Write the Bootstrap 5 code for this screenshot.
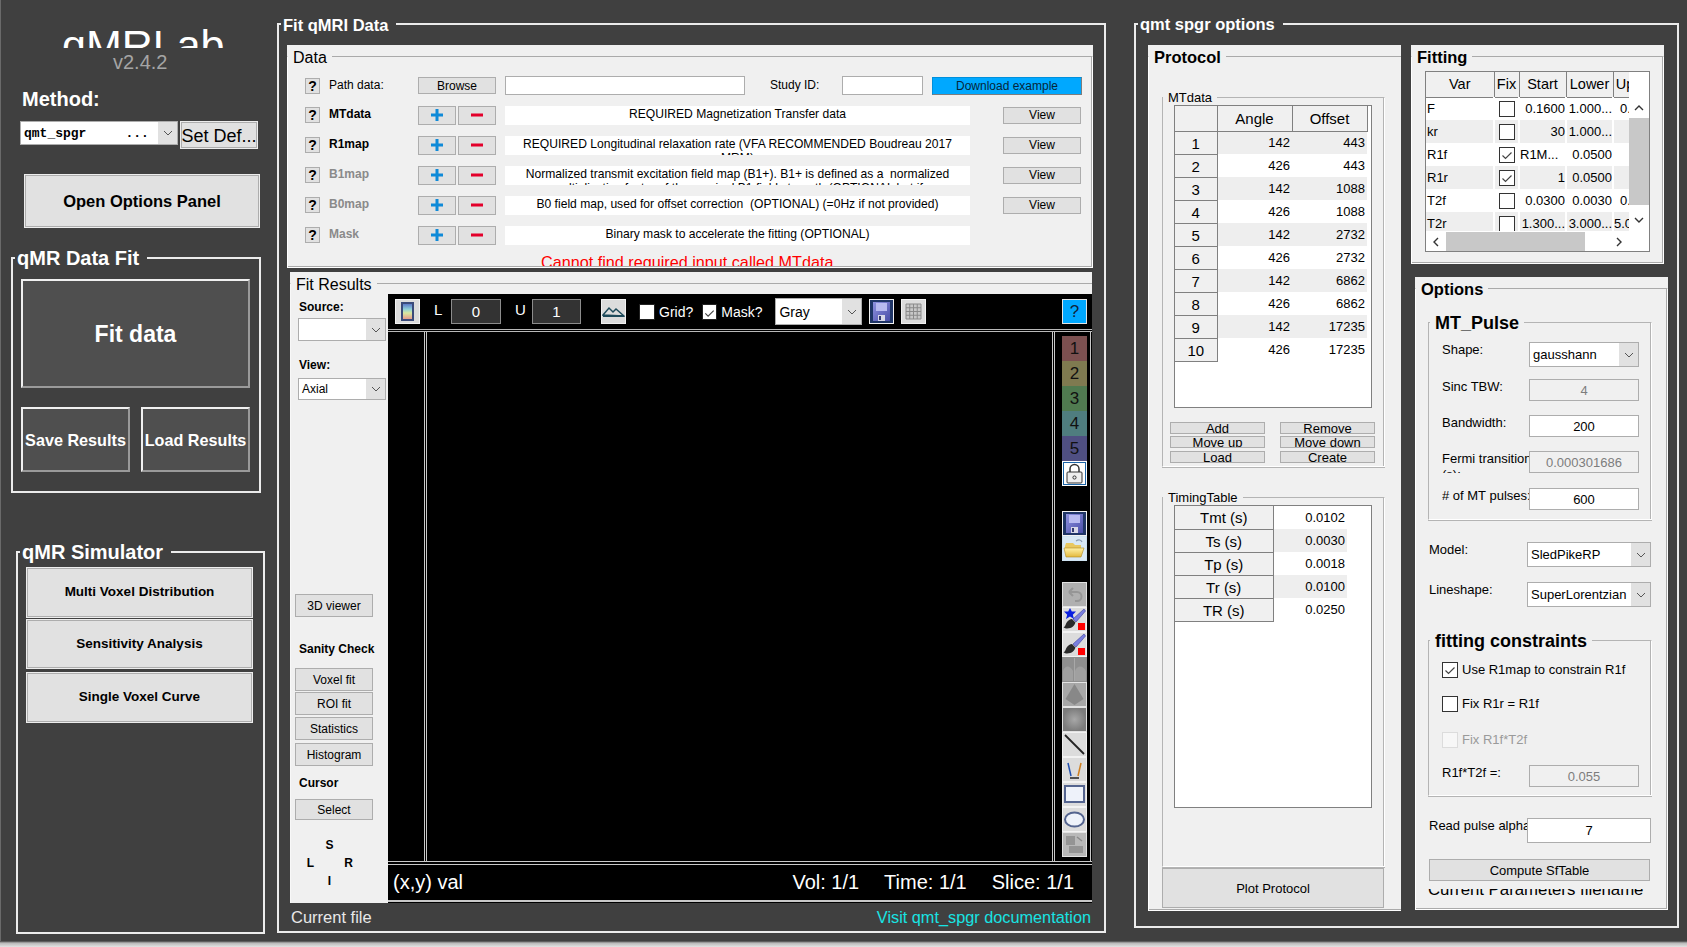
<!DOCTYPE html>
<html lang="en">
<head>
<meta charset="UTF-8" />
<title>qMRLab</title>
<link href="https://cdn.jsdelivr.net/npm/bootstrap@5.3.0/dist/css/bootstrap.min.css" rel="stylesheet"/>
<style>
  html, body { height: 100%; }
  body {
    margin: 0; width: 1687px; height: 947px; overflow: hidden;
    background: linear-gradient(to bottom, #404040 941px, #b8b8b8 943px, #e4e4e4 947px);
    font-family: "Liberation Sans", Arial, sans-serif; font-size: 13px; line-height: 16px; color: #000;
  }
  .svg-defs { display: block; width: 0; height: 0; }
  .app-root { height: 941px; box-shadow: inset 1px 0 #6a6a6a; }

  /* shared widgets */
  .mbtn {
    --bs-btn-padding-x: 0; --bs-btn-padding-y: 0; --bs-btn-border-radius: 0;
    --bs-btn-font-size: 12px; --bs-btn-line-height: 1;
    --bs-btn-bg: #e1e1e1; --bs-btn-border-color: #adadad; --bs-btn-color: #000;
    display: flex; align-items: center; justify-content: center; flex: none;
    white-space: nowrap; overflow: hidden; border-width: 1px;
    font-family: inherit;
  }
  .big-light { --bs-btn-border-color: #ededed; box-shadow: inset 0 0 0 1px #adadad; }
  .big-dark {
    --bs-btn-bg: #4f4f4f; --bs-btn-color: #fff; font-weight: 700; border-width: 2px;
    border-color: #f0f0f0 #9a9a9a #9a9a9a #f0f0f0; padding-top: 2px;
  }
  .msel { display: flex; flex: none; background: #fff; border: 1px solid #adadad; align-items: center; overflow: hidden; color: #000; }
  .msel > span { flex: 1; padding-left: 3px; white-space: pre; overflow: hidden; }
  .msel > i { flex: none; width: 19px; align-self: stretch; background: #e1e1e1; display: flex; align-items: center; justify-content: center; }
  .minp {
    flex: none; display: block; border: 1px solid #adadad; background: #fff; color: #000; text-align: center;
    font: 13px/16px "Liberation Sans", Arial, sans-serif; padding: 0; border-radius: 0; outline: 0; min-width: 0;
  }
  .minp:disabled { background: #f0f0f0; color: #7d7d7d; }
  .gbox { flex: none; width: 16px; height: 16px; background: #fff; border: 1px solid #333; display: block; }
  .gbox svg { display: block; }

  /* white group frames on the dark window */
  .frame { border: 2px solid #ececec; padding: 0; margin: 0; min-width: 0; }
  .frame > legend {
    float: none; width: auto; margin: 0 0 0 2px; padding: 0 8px 0 2px;
    color: #fff; font-weight: 700; font-size: 20px; line-height: 22px;
  }
  /* light uipanels */
  .pane { background: #f0f0f0; overflow: hidden; padding-top: 1px; flex: none; }
  .etch { border: 1px solid #aaa; border-bottom-color: #fff; border-right-color: #fff; border-left-color: #fff; padding: 0; margin: 0; height: 100%; min-width: 0; box-shadow: inset 0 -1px #aaa, inset -1px 0 #aaa; }
  .etch > legend {
    float: none; width: auto; margin: 0; padding: 3px 5px 0 5px;
    font-size: 16px; line-height: 17px; color: #000;
  }
  .etch.head-bold > legend { font-weight: 700; font-size: 16.5px; }
  .sub { border: 1px solid #b4b4b4; border-bottom-color: #fff; border-right-color: #fff; padding: 0; margin: 0; min-width: 0; box-shadow: 0 1px #b4b4b4, inset -1px 0 #b4b4b4; }
  .sub > legend { float: none; width: auto; margin: 0; padding: 2px 5px 0 5px; font-size: 13px; line-height: 14px; }
  .sub.head-big > legend { margin-left: 1px; font-weight: 700; font-size: 18px; line-height: 17px; padding-top: 3px; }

  /* left column */
  .col-left { width: 277px; flex: none; }
  .logo-clip { height: 48px; overflow: hidden; padding: 24px 0 0 62px; color: #fff; font-size: 43px; line-height: 43px; }
  .ver { margin: 4px 0 0 113px; color: #a5a5a5; font-size: 20px; line-height: 20px; }
  .method-lbl { margin: 17px 0 0 22px; color: #fff; font-weight: 700; font-size: 20px; line-height: 20px; }
  .method-row { margin: 12px 0 0 20px; height: 28px; }
  .method-sel { width: 158px; height: 24px; font: 700 13px "Liberation Mono", monospace; }
  .setdef { width: 78px; height: 28px; margin-left: 2px; --bs-btn-font-size: 18px; padding-top: 2px; }
  .open-opts { margin: 25px 0 0 24px; width: 236px; height: 54px; --bs-btn-font-size: 16.5px; font-weight: 700; padding-top: 1px; }
  .fit-frame { margin: 19px 0 0 11px; width: 250px; height: 246px; }
  .fit-go { margin: 10px 0 0 8px; width: 229px; height: 109px; --bs-btn-font-size: 23px; }
  .fit-row { margin: 19px 0 0 8px; gap: 11px; }
  .fit-row .mbtn { width: 109px; height: 65px; --bs-btn-font-size: 16.2px; }
  .sim-frame { margin: 48px 0 0 16px; width: 249px; height: 393px; }
  .sim-frame .mbtn { width: 227px; margin-left: 8px; --bs-btn-font-size: 13.5px; font-weight: 700; }
  .sim1 { height: 51px; margin-top: 4px; padding-bottom: 2px; }
  .sim2 { height: 50px; margin-top: 1px; }
  .sim3 { height: 51px; margin-top: 3px; padding-bottom: 2px; }

  /* middle column */
  .col-mid { width: 829px; flex: none; margin-top: 14px; height: 919px; }
  .col-mid > legend, .col-right > legend { font-size: 16.5px; line-height: 17px; padding-top: 3px; }
  .data-pane { margin: 11px 0 0 8px; width: 806px; height: 223px; }
  .drow { display: flex; align-items: center; height: 20px; margin-top: 10px; font-size: 12px; }
  .drow.first { height: 19px; }
  .qbtn { width: 15px; height: 16px; margin-left: 17px; --bs-btn-font-size: 14px; font-weight: 700; }
  .dname { width: 98px; padding: 0 0 2px 9px; flex: none; }
  .fname { font-weight: 700; }
  .off { color: #8a8a8a; }
  .pm { width: 38px; height: 19px; }
  .pm + .pm { margin-left: 2px; }
  .browse { width: 78px; height: 17px; }
  .path { width: 240px; height: 19px; margin-left: 9px; }
  .study-l { width: 97px; padding: 0 0 2px 25px; flex: none; }
  .study { width: 81px; height: 19px; }
  .dl { width: 150px; height: 18px; margin-left: 9px; --bs-btn-bg: #00a8ff; --bs-btn-color: #06263a; --bs-btn-border-color: #0090dc; border-bottom-color: #7d7d7d; border-right-color: #7d7d7d; }
  .desc { width: 465px; height: 19px; margin-left: 9px; background: #fff; overflow: hidden; text-align: center; padding: 1px 4px 0; line-height: 14px; flex: none; font-size: 12.1px; }
  .view { width: 78px; height: 17px; margin-left: 33px; }
  .err { margin: 8px 0 0 253px; height: 13px; overflow: hidden; color: #f00; font-size: 16.2px; line-height: 18px; white-space: nowrap; }

  .res-pane { margin: 4px 0 0 11px; width: 802px; height: 631px; }
  .res-pane .etch { box-shadow: none; border-left-color: #f8f8f8; border-bottom: 0; border-right: 0; }
  .side { width: 97px; flex: none; font-size: 12px; height: 610px; }
  .lbl-b { font-weight: 700; line-height: 15px; margin-left: 8px; }
  .src-lab { margin-top: 7px; }
  .side-sel { width: 88px; margin-left: 7px; height: 23px; font-size: 12px; }
  .sel-src { margin-top: 3px; }
  .view-lab { margin-top: 17px; }
  .sel-ax { margin-top: 5px; height: 22px; }
  .sbtn { width: 78px; margin-left: 4px; height: 23px; }
  .b3d { margin-top: 194px; }
  .san { margin-top: 25px; }
  .s1 { margin-top: 11px; } .s2 { margin-top: 1px; } .s3 { margin-top: 2px; } .s4 { margin-top: 3px; }
  .cur { margin-top: 10px; }
  .s5 { margin-top: 8px; height: 21px; }
  .ori { display: grid; grid-template-columns: repeat(3, 19px); margin: 18px 0 0 10px; font-weight: 700; line-height: 15px; text-align: center; row-gap: 3px; }
  .ori b:nth-child(1) { grid-column: 2; }
  .ori b:nth-child(2) { grid-column: 1; }
  .ori b:nth-child(3) { grid-column: 3; }
  .ori b:nth-child(4) { grid-column: 2; }

  .scope { flex: 1; background: #000; height: 609px; margin-top: 1px; color: #fff; min-width: 0; }
  .scope-top { height: 38px; align-items: center; padding: 0 5px 0 7px; border-bottom: 3px double #b9b9b9; }
  .tbtn { flex: none; width: 25px; height: 25px; background: #dcdcdc; border: 1px solid #f2f2f2; display: block; padding: 0; }
  .tbtn svg { display: block; width: 23px; height: 23px; }
  .lim { flex: none; width: 50px; height: 25px; background: #333; border: 1px solid #8c8c8c; color: #fff; font-size: 15px; text-align: center; margin-left: 3px; }
  .lim-l { flex: none; width: 14px; font-size: 15px; margin-left: 14px; margin-bottom: 4px; }
  .u-val { width: 49px; }
  .mtn { margin-left: 20px; }
  .mini-chk { flex: none; width: 16px; height: 16px; background: #fff; border: 1px solid #222; display: block; }
  .chk-a { margin-left: 13px; } .chk-b { margin-left: 9px; width: 15px; }
  .tt { font-size: 14px; margin-left: 4px; }
  .cmap { width: 87px; height: 27px; font-size: 14px; margin-left: 13px; }
  .save-a { margin-left: 7px; }
  .gridb { margin-left: 7px; }
  .scope-q { width: 25px; height: 25px; margin-left: auto; --bs-btn-bg: #00a8ff; --bs-btn-border-color: #e4e4e4; --bs-btn-font-size: 17px; --bs-btn-color: #10233a; }
  .scope-mid { height: 529px; }
  .plot-wrap { width: 667px; flex: none; border-right: 3px double #c8c8c8; padding-left: 36px; }
  .plot { height: 100%; border-left: 3px double #c8c8c8; }
  .tools { width: 36px; flex: none; border-right: 1px solid #c8c8c8; padding: 4px 0 0 7px; margin-right: 1px; }
  .num { width: 25px; height: 25px; display: flex; align-items: center; justify-content: center; color: #111; font-size: 17px; }
  .n1 { background: #7c5050; } .n2 { background: #7f7a50; } .n3 { background: #507a50; } .n4 { background: #4f7d7f; } .n5 { background: #4f4f82; }
  .t-lock { background: #fff; border-color: #fff; outline: 1px solid #1a64a8; outline-offset: -2px; }
  .t-save { margin-top: 25px; } .t-open { border-color: #cfe3f2; }
  .t-undo { margin-top: 21px; }
  .t-gray { background: #b0b0b0; border-color: #e2e2e2; } .t-flat { border-color: #8f8f8f; }
  .scope-low { height: 41px; border-top: 4px double #c8c8c8; border-bottom: 2px solid #c8c8c8; align-items: center; padding: 0 18px 2px 5px; font-size: 20px; }
  .gap-s { margin-left: 25px; }
  .foot { height: 26px; padding: 1px 13px 0 12px; align-items: center; justify-content: space-between; }
  .foot-l { color: #e8e8e8; font-size: 16.5px; }
  .foot-r { color: #18e3e3; font-size: 16.3px; }

  /* right column */
  .col-right { width: 545px; flex: none; margin: 14px 0 0 28px; height: 914px; }
  .col-right > legend { padding-top: 2px; padding-bottom: 1px; }
  .prot { width: 253px; height: 866px; margin: 11px 0 0 12px; }
  .prot .etch { box-shadow: inset 0 -1px #aaa; border-right: 0; }
  .grp { margin-left: 13px; width: 223px; height: 378px; }
  .grp-a { margin-top: 23px; }
  .grp-b { margin-top: 22px; }
  .tbl-box { margin-left: 11px; width: 198px; height: 303px; border: 1px solid #808080; background: #fff; overflow: hidden; }
  .ptab { table-layout: fixed; border-collapse: collapse; }
  .ptab th { font-weight: 400; background: #f0f0f0; border-right: 1px solid #808080; border-bottom: 1px solid #808080; font-size: 15px; text-align: center; padding: 2px 0 0; overflow: hidden; }
  .ptab td { font-size: 13px; text-align: right; padding: 0 2px 0 0; white-space: nowrap; overflow: hidden; }
  .ptab tr { height: 23px; }
  .ptab tr.hd { height: 25px; }
  .ptab tbody tr:nth-child(even) td { background: #eee; }
  .pbtns { display: grid; grid-template-columns: 95px 95px; column-gap: 15px; margin: 14px 0 0 7px; }
  .pbtns .mbtn { height: 12px; --bs-btn-font-size: 13px; width: 95px; }
  .pbtns .gap2 { margin-top: 2px; }
  .pbtns .gap3 { margin-top: 3px; }
  .plot-prot { width: 222px; height: 40px; margin: 1px 0 0 13px; --bs-btn-font-size: 13px; }

  .stack { margin-left: 10px; flex: none; width: 257px; }
  .fitting { width: 253px; height: 219px; margin-top: 11px; }
  .fitting .etch { box-shadow: inset 0 -1px #aaa, inset -1px 0 #aaa; }
  .ftab-box { margin: 5px 0 0 13px; width: 225px; height: 181px; border: 1px solid #808080; background: #fff; overflow: hidden; }
  .ftab-top { height: 159px; }
  .ftab-clip { width: 203px; height: 159px; overflow: hidden; flex: none; }
  .ftab { table-layout: fixed; border-collapse: collapse; width: 232px; font-size: 13px; }
  .ftab th { font-weight: 400; text-align: center; font-size: 14.5px; background: #f0f0f0; border-right: 1px solid #808080; border-bottom: 1px solid #808080; padding: 0; height: 25px; white-space: nowrap; overflow: hidden; }
  .ftab td { padding: 0; height: 23px; white-space: nowrap; overflow: hidden; text-align: right; background: #fff; border-right: 2px solid #fff; }
  .ftab tr:nth-child(even) td { background: #eee; border-right-color: #fff; }
  .ftab td:first-child { text-align: left; padding: 0 0 0 1px; }
  .ftab td.mid .gbox { margin: 0 auto; }
  .ftab td.lft { text-align: left; }
  .ftab td.ind { padding-left: 6px; }
  .vbar { width: 20px; flex: none; padding-top: 25px; }
  .vbar i, .hbar i { display: flex; align-items: center; justify-content: center; }
  .vbar i { height: 21px; }
  .vbar em { display: block; height: 87px; background: #c8c8c8; margin-bottom: 4px; }
  .hbar { height: 20px; width: 203px; margin-top: 1px; }
  .hbar i { width: 20px; }
  .hbar em { display: block; width: 139px; background: #c8c8c8; }
  .hbar .rgt { margin-left: auto; }

  .options { width: 253px; height: 633px; margin: 13px 0 0 4px; }
  .options .etch { box-shadow: inset 0 -1px #aaa, inset -1px 0 #aaa; }
  .pulse { margin: 14px 0 0 12px; width: 224px; height: 208px; }
  .cons { margin: 23px 0 0 12px; width: 224px; height: 166px; }
  .frow { display: flex; margin-left: 13px; overflow: hidden; }
  .flab { width: 87px; flex: none; white-space: nowrap; overflow: hidden; }
  .fval { width: 110px; height: 22px; }
  .fsel { width: 110px; height: 25px; }
  .frow2 { display: flex; margin-left: 13px; overflow: hidden; }
  .flab2 { width: 98px; flex: none; white-space: nowrap; overflow: hidden; }
  .fsel2 { width: 124px; height: 25px; }
  .chk-row { display: flex; align-items: center; gap: 4px; margin-left: 13px; height: 16px; }
  .dis { color: #9a9a9a; }
  .gbox.dis-b { background: #f7f7f7; border-color: #dcdcdc; }
  .compute { width: 221px; height: 22px; margin: 16px 0 0 13px; --bs-btn-font-size: 13px; }
  .tail { margin: 8px 0 0 12px; height: 10px; overflow: hidden; font-size: 16.8px; white-space: nowrap; }
  .tail span { display: block; margin-top: -8px; line-height: 18px; }
  .r-shape { margin-top: 10px; height: 25px; } .r-sinc { margin-top: 12px; height: 22px; }
  .r-band { margin-top: 14px; height: 22px; } .r-fermi { margin-top: 14px; height: 22px; } .r-num { margin-top: 15px; height: 22px; }
  .r-model { margin-top: 22px; height: 25px; } .r-line { margin-top: 15px; height: 25px; }
  .c1 { margin-top: 12px; } .c2 { margin-top: 18px; } .c3 { margin-top: 20px; } .c4 { margin-top: 17px; height: 22px; }
  .r-read { margin-top: 22px; height: 25px; }
</style>
</head>
<body>

<!-- shared icon shapes -->
<svg class="svg-defs" aria-hidden="true">
  <defs>
    <symbol id="chev" viewBox="0 0 10 6"><path d="M1 1l4 4 4-4" fill="none" stroke="#555" stroke-width="1"/></symbol>
    <symbol id="tick" viewBox="0 0 14 14"><path d="M2.500 7.500l3 3 6-6" fill="none" stroke="#444" stroke-width="1.200"/></symbol>
    <symbol id="plus" viewBox="0 0 12 12"><path d="M4.500 0h3v4.500H12v3H7.500V12h-3V7.500H0v-3h4.500z" fill="#0f8ad8"/></symbol>
    <symbol id="minus" viewBox="0 0 12 12"><rect y="4.500" width="12" height="3" fill="#e3002b"/></symbol>
    <linearGradient id="cbar" x1="0" y1="0" x2="0" y2="1">
      <stop offset="0" stop-color="#5d79c8"/><stop offset=".35" stop-color="#8fd0d8"/>
      <stop offset=".6" stop-color="#d8e8a0"/><stop offset="1" stop-color="#e69a8c"/>
    </linearGradient>
    <linearGradient id="flop" x1="0" y1="0" x2="1" y2="1">
      <stop offset="0" stop-color="#8f92e0"/><stop offset="1" stop-color="#4a4ea8"/>
    </linearGradient>
    <linearGradient id="fold" x1="0" y1="0" x2="0" y2="1">
      <stop offset="0" stop-color="#fff2a8"/><stop offset="1" stop-color="#e3b93c"/>
    </linearGradient>
    <radialGradient id="blurc"><stop offset="0" stop-color="#a8a8a8"/><stop offset="1" stop-color="#7c7c7c"/></radialGradient>
    <symbol id="floppy" viewBox="0 0 23 23">
      <rect width="23" height="23" fill="#1f3566"/>
      <path d="M3 2h17v19H3z" fill="url(#flop)"/>
      <rect x="6" y="3" width="11" height="8" fill="#b8baf0"/>
      <rect x="8" y="15" width="7" height="6" fill="#d8d8e8"/>
      <rect x="9" y="16" width="2" height="4" fill="#333a70"/>
    </symbol>
    <symbol id="brush" viewBox="0 0 23 23">
      <path d="M21 1l1.500 2-9.500 11-3-3z" fill="#7a7fe0" stroke="#3a3f9a" stroke-width=".6"/>
      <path d="M9 11l3.500 3.500c-1 3-3.500 6-8.500 6-1 0-2.500-.5-3.500-1 2-1 2-3.500 3.500-5.500 1-1.500 3-3 5-3z" fill="#2a2a2a"/>
      <rect x="15" y="15" width="7" height="7" fill="#f00"/>
    </symbol>
  </defs>
</svg>

<div class="d-flex app-root">

  <!-- left column: method and launch buttons -->
  <div class="col-left">
    <div class="logo-clip">qMRLab</div>
    <div class="ver">v2.4.2</div>
    <div class="method-lbl">Method:</div>
    <div class="method-row d-flex align-items-start">
      <div class="msel method-sel"><span>qmt_spgr     ...</span><i><svg width="10" height="6"><use href="#chev"/></svg></i></div>
      <button class="btn mbtn setdef big-light">Set Def...</button>
    </div>
    <button class="btn mbtn big-light open-opts">Open Options Panel</button>

    <fieldset class="frame fit-frame">
      <legend>qMR Data Fit</legend>
      <button class="btn mbtn big-dark fit-go">Fit data</button>
      <div class="d-flex fit-row">
        <button class="btn mbtn big-dark">Save Results</button>
        <button class="btn mbtn big-dark">Load Results</button>
      </div>
    </fieldset>

    <fieldset class="frame sim-frame">
      <legend>qMR Simulator</legend>
      <button class="btn mbtn big-light sim1">Multi Voxel Distribution</button>
      <button class="btn mbtn big-light sim2">Sensitivity Analysis</button>
      <button class="btn mbtn big-light sim3">Single Voxel Curve</button>
    </fieldset>
  </div>

  <!-- middle column: data and viewer -->
  <fieldset class="frame col-mid">
    <legend>Fit qMRI Data</legend>

    <div class="pane data-pane">
      <fieldset class="etch">
        <legend>Data</legend>
        <div class="drow first">
          <button class="btn mbtn qbtn">?</button>
          <div class="dname">Path data:</div>
          <button class="btn mbtn browse">Browse</button>
          <input class="minp path" type="text">
          <div class="study-l">Study ID:</div>
          <input class="minp study" type="text">
          <button class="btn mbtn dl">Download example</button>
        </div>
        <div class="drow">
          <button class="btn mbtn qbtn">?</button>
          <div class="dname fname">MTdata</div>
          <button class="btn mbtn pm"><svg width="12" height="12"><use href="#plus"/></svg></button>
          <button class="btn mbtn pm"><svg width="12" height="12"><use href="#minus"/></svg></button>
          <div class="desc">REQUIRED Magnetization Transfer data</div>
          <button class="btn mbtn view">View</button>
        </div>
        <div class="drow">
          <button class="btn mbtn qbtn">?</button>
          <div class="dname fname">R1map</div>
          <button class="btn mbtn pm"><svg width="12" height="12"><use href="#plus"/></svg></button>
          <button class="btn mbtn pm"><svg width="12" height="12"><use href="#minus"/></svg></button>
          <div class="desc">REQUIRED Longitudinal relaxation rate (VFA RECOMMENDED Boudreau 2017 MRM)</div>
          <button class="btn mbtn view">View</button>
        </div>
        <div class="drow">
          <button class="btn mbtn qbtn">?</button>
          <div class="dname fname off">B1map</div>
          <button class="btn mbtn pm"><svg width="12" height="12"><use href="#plus"/></svg></button>
          <button class="btn mbtn pm"><svg width="12" height="12"><use href="#minus"/></svg></button>
          <div class="desc">Normalized transmit excitation field map (B1+). B1+ is defined as a&nbsp; normalized multiplicative factor of the nominal B1 field strength (OPTIONAL but if</div>
          <button class="btn mbtn view">View</button>
        </div>
        <div class="drow">
          <button class="btn mbtn qbtn">?</button>
          <div class="dname fname off">B0map</div>
          <button class="btn mbtn pm"><svg width="12" height="12"><use href="#plus"/></svg></button>
          <button class="btn mbtn pm"><svg width="12" height="12"><use href="#minus"/></svg></button>
          <div class="desc">B0 field map, used for offset correction&nbsp; (OPTIONAL) (=0Hz if not provided)</div>
          <button class="btn mbtn view">View</button>
        </div>
        <div class="drow">
          <button class="btn mbtn qbtn">?</button>
          <div class="dname fname off">Mask</div>
          <button class="btn mbtn pm"><svg width="12" height="12"><use href="#plus"/></svg></button>
          <button class="btn mbtn pm"><svg width="12" height="12"><use href="#minus"/></svg></button>
          <div class="desc">Binary mask to accelerate the fitting (OPTIONAL)</div>
        </div>
        <div class="err">Cannot find required input called MTdata</div>
      </fieldset>
    </div>

    <div class="pane res-pane">
      <fieldset class="etch">
        <legend>Fit Results</legend>
        <div class="d-flex">
          <div class="side">
            <div class="lbl-b src-lab">Source:</div>
            <div class="msel side-sel sel-src"><span></span><i><svg width="10" height="6"><use href="#chev"/></svg></i></div>
            <div class="lbl-b view-lab">View:</div>
            <div class="msel side-sel sel-ax"><span>Axial</span><i><svg width="10" height="6"><use href="#chev"/></svg></i></div>
            <button class="btn mbtn sbtn b3d">3D viewer</button>
            <div class="lbl-b san">Sanity Check</div>
            <button class="btn mbtn sbtn s1">Voxel fit</button>
            <button class="btn mbtn sbtn s2">ROI fit</button>
            <button class="btn mbtn sbtn s3">Statistics</button>
            <button class="btn mbtn sbtn s4">Histogram</button>
            <div class="lbl-b cur">Cursor</div>
            <button class="btn mbtn sbtn s5">Select</button>
            <div class="ori"><b>S</b><b>L</b><b>R</b><b>I</b></div>
          </div>

          <div class="scope">
            <div class="d-flex scope-top">
              <span class="tbtn"><svg viewBox="0 0 23 23"><rect x="5" y="2" width="13" height="19" fill="#3a4a7a"/><rect x="7" y="4" width="9" height="15" fill="url(#cbar)"/></svg></span>
              <span class="lim-l">L</span>
              <span class="d-flex align-items-center justify-content-center lim">0</span>
              <span class="lim-l">U</span>
              <span class="d-flex align-items-center justify-content-center lim u-val">1</span>
              <span class="tbtn mtn"><svg viewBox="0 0 23 23"><path d="M1 15l6-7 4 4 3-3 8 7z" fill="none" stroke="#1e4a5a" stroke-width="1.500"/><rect x="1" y="15" width="21" height="2" fill="#1e4a5a"/></svg></span>
              <span class="mini-chk chk-a"></span>
              <span class="tt">Grid?</span>
              <span class="mini-chk chk-b"><svg width="13" height="14"><use href="#tick"/></svg></span>
              <span class="tt">Mask?</span>
              <div class="msel cmap"><span>Gray</span><i><svg width="10" height="6"><use href="#chev"/></svg></i></div>
              <span class="tbtn save-a"><svg viewBox="0 0 23 23"><use href="#floppy"/></svg></span>
              <span class="tbtn gridb"><svg viewBox="0 0 23 23"><path d="M4 4h15v15H4zM4 7.750h15M4 11.500h15M4 15.250h15M7.750 4v15M11.500 4v15M15.250 4v15" fill="#c8c8c8" stroke="#8a8a8a"/></svg></span>
              <button class="btn mbtn scope-q">?</button>
            </div>

            <div class="d-flex scope-mid">
              <div class="plot-wrap"><div class="plot"></div></div>
              <div class="tools">
                <div class="num n1">1</div>
                <div class="num n2">2</div>
                <div class="num n3">3</div>
                <div class="num n4">4</div>
                <div class="num n5">5</div>
                <span class="tbtn t-lock"><svg viewBox="0 0 23 23"><path d="M7 10V7a4.500 4.500 0 0 1 9 0v3" fill="none" stroke="#333" stroke-width="1.500"/><rect x="4" y="10" width="15" height="11" rx="1" fill="#eee" stroke="#333"/><circle cx="11.500" cy="15.500" r="1.600" fill="none" stroke="#333"/></svg></span>
                <span class="tbtn t-save"><svg viewBox="0 0 23 23"><use href="#floppy"/></svg></span>
                <span class="tbtn t-open"><svg viewBox="0 0 23 23"><rect width="23" height="23" fill="#d8e8f4"/><path d="M2 9l1-3h7l2 2h6v4H2z" fill="#e8c860"/><path d="M1 11h20l-3 9H3z" fill="url(#fold)" stroke="#b08820" stroke-width=".6"/><path d="M13 4c3-2 5-1 6 1" fill="none" stroke="#8a9ab0" stroke-width="1.200"/></svg></span>
                <span class="tbtn t-undo t-gray"><svg viewBox="0 0 23 23"><rect width="23" height="23" fill="#b0b0b0"/><path d="M6 9h8a4.500 4.500 0 0 1 0 9h-2M6 9l4-4M6 9l4 4" fill="none" stroke="#969696" stroke-width="2"/></svg></span>
                <span class="tbtn"><svg viewBox="0 0 23 23"><use href="#brush"/><path d="M7 0l1.800 3.600H13L9.800 6.800 11 11 7 8.600 3 11l1.200-4.200L1 3.600h4.200z" fill="#0a1fe0"/></svg></span>
                <span class="tbtn"><svg viewBox="0 0 23 23"><use href="#brush"/></svg></span>
                <span class="tbtn t-gray t-flat"><svg viewBox="0 0 23 23"><rect width="23" height="23" fill="#8f8f8f"/><path d="M0 13c2-6 7-6 10 0v10H0zM12 13c2-6 8-6 11 0v10H12z" fill="#a0a0a0"/><rect x="11" width="1" height="23" fill="#a8a8a8"/></svg></span>
                <span class="tbtn t-gray"><svg viewBox="0 0 23 23"><rect width="23" height="23" fill="#a8a8a8"/><path d="M11.500 1l9 15-9 6-9-6z" fill="#888"/></svg></span>
                <span class="tbtn t-gray"><svg viewBox="0 0 23 23"><rect width="23" height="23" fill="url(#blurc)"/></svg></span>
                <span class="tbtn"><svg viewBox="0 0 23 23"><path d="M2 2l19 19" stroke="#222" stroke-width="1.800"/></svg></span>
                <span class="tbtn"><svg viewBox="0 0 23 23"><path d="M5 5l3 13" stroke="#2050b0" stroke-width="1.500"/><path d="M18 5l-3 13" stroke="#d08020" stroke-width="1.500"/><path d="M7 20h9" stroke="#222" stroke-width="1.500"/></svg></span>
                <span class="tbtn"><svg viewBox="0 0 23 23"><rect x="2" y="3" width="19" height="16" fill="#eef2fa" stroke="#54648f" stroke-width="2"/></svg></span>
                <span class="tbtn"><svg viewBox="0 0 23 23"><ellipse cx="11.500" cy="11.500" rx="9.500" ry="7" fill="#eef2fa" stroke="#54648f" stroke-width="2"/></svg></span>
                <span class="tbtn t-gray"><svg viewBox="0 0 23 23"><rect width="23" height="23" fill="#b8b8b8"/><rect x="3" y="3" width="9" height="9" fill="#949494"/><rect x="6" y="13" width="14" height="7" fill="#949494"/><path d="M14 4l5 4" stroke="#8a8a8a" stroke-width="1.500"/></svg></span>
              </div>
            </div>

            <div class="d-flex scope-low">
              <span>(x,y) val</span>
              <span class="ms-auto">Vol: 1/1</span>
              <span class="gap-s">Time: 1/1</span>
              <span class="gap-s">Slice: 1/1</span>
            </div>
          </div>
        </div>
      </fieldset>
    </div>

    <div class="d-flex foot">
      <span class="foot-l">Current file</span>
      <span class="foot-r">Visit qmt_spgr documentation</span>
    </div>
  </fieldset>

  <!-- right column: model options -->
  <fieldset class="frame col-right">
    <legend>qmt spgr options</legend>
    <div class="d-flex">
      <div class="pane prot">
        <fieldset class="etch head-bold">
          <legend>Protocol</legend>

          <fieldset class="sub grp grp-a">
            <legend>MTdata</legend>
            <div class="tbl-box">
              <table class="ptab">
                <colgroup><col width="42"><col width="75"><col width="75"></colgroup>
                <tbody id="mtRows"></tbody>
              </table>
            </div>
            <div class="pbtns">
              <button class="btn mbtn">Add</button><button class="btn mbtn">Remove</button>
              <button class="btn mbtn gap2">Move up</button><button class="btn mbtn gap2">Move down</button>
              <button class="btn mbtn gap3">Load</button><button class="btn mbtn gap3">Create</button>
            </div>
          </fieldset>

          <fieldset class="sub grp grp-b">
            <legend>TimingTable</legend>
            <div class="tbl-box">
              <table class="ptab">
                <colgroup><col width="98"><col width="74"></colgroup>
                <tbody id="timingRows"></tbody>
              </table>
            </div>
          </fieldset>
          <button class="btn mbtn plot-prot">Plot Protocol</button>
        </fieldset>
      </div>

      <div class="stack">
        <div class="pane fitting">
          <fieldset class="etch head-bold">
            <legend>Fitting</legend>
            <div class="ftab-box">
              <div class="d-flex ftab-top">
                <div class="ftab-clip">
                  <table class="ftab">
                    <colgroup><col width="68"><col width="25"><col width="47"><col width="47"><col width="45"></colgroup>
                    <thead><tr><th>Var</th><th>Fix</th><th>Start</th><th>Lower</th><th>Upper</th></tr></thead>
                    <tbody id="fitRows"></tbody>
                  </table>
                </div>
                <div class="vbar">
                  <i><svg width="10" height="6"><path d="M1 5l4-4 4 4" fill="none" stroke="#333" stroke-width="1.400"/></svg></i>
                  <em></em>
                  <i><svg width="10" height="6"><path d="M1 1l4 4 4-4" fill="none" stroke="#333" stroke-width="1.400"/></svg></i>
                </div>
              </div>
              <div class="d-flex hbar">
                <i><svg width="6" height="10"><path d="M5 1L1 5l4 4" fill="none" stroke="#333" stroke-width="1.400"/></svg></i>
                <em></em>
                <i class="rgt"><svg width="6" height="10"><path d="M1 1l4 4-4 4" fill="none" stroke="#333" stroke-width="1.400"/></svg></i>
              </div>
            </div>
          </fieldset>
        </div>

        <div class="pane options">
          <fieldset class="etch head-bold">
            <legend>Options</legend>

            <fieldset class="sub head-big pulse">
              <legend>MT_Pulse</legend>
              <div class="frow r-shape"><div class="flab">Shape:</div><div class="msel fsel"><span>gausshann</span><i><svg width="10" height="6"><use href="#chev"/></svg></i></div></div>
              <div class="frow r-sinc"><div class="flab">Sinc TBW:</div><input class="minp fval" value="4" disabled></div>
              <div class="frow r-band"><div class="flab">Bandwidth:</div><input class="minp fval" value="200"></div>
              <div class="frow r-fermi"><div class="flab">Fermi transition<br>(s):</div><input class="minp fval" value="0.000301686" disabled></div>
              <div class="frow r-num"><div class="flab"># of MT pulses:</div><input class="minp fval" value="600"></div>
            </fieldset>

            <div class="frow2 r-model"><div class="flab2">Model:</div><div class="msel fsel2"><span>SledPikeRP</span><i><svg width="10" height="6"><use href="#chev"/></svg></i></div></div>
            <div class="frow2 r-line"><div class="flab2">Lineshape:</div><div class="msel fsel2"><span>SuperLorentzian</span><i><svg width="10" height="6"><use href="#chev"/></svg></i></div></div>

            <fieldset class="sub head-big cons">
              <legend>fitting constraints</legend>
              <div class="chk-row c1"><span class="gbox"><svg width="14" height="14"><use href="#tick"/></svg></span>Use R1map to constrain R1f</div>
              <div class="chk-row c2"><span class="gbox"></span>Fix R1r = R1f</div>
              <div class="chk-row c3 dis"><span class="gbox dis-b"></span>Fix R1f*T2f</div>
              <div class="frow c4"><div class="flab">R1f*T2f =:</div><input class="minp fval" value="0.055" disabled></div>
            </fieldset>

            <div class="frow2 r-read"><div class="flab2">Read pulse alpha</div><input class="minp fsel2" value="7"></div>
            <button class="btn mbtn compute">Compute SfTable</button>
            <div class="tail"><span>Current Parameters filename</span></div>
          </fieldset>
        </div>
      </div>
    </div>
  </fieldset>
</div>

<script>
  // fill the three tables
  const mtRows = [[142,443],[426,443],[142,1088],[426,1088],[142,2732],[426,2732],[142,6862],[426,6862],[142,17235],[426,17235]];
  let html = '<tr class="hd"><th></th><th>Angle</th><th>Offset</th></tr>';
  mtRows.forEach((r, i) => {
    html += `<tr><th>${i + 1}</th><td>${r[0]}</td><td>${r[1]}</td></tr>`;
  });
  document.getElementById('mtRows').innerHTML = html;

  const timing = [['Tmt (s)','0.0102'],['Ts (s)','0.0030'],['Tp (s)','0.0018'],['Tr (s)','0.0100'],['TR (s)','0.0250']];
  document.getElementById('timingRows').innerHTML = timing.map(r => `<tr><th>${r[0]}</th><td>${r[1]}</td></tr>`).join('');

  const tick = '<svg width="14" height="14"><use href="#tick"/></svg>';
  const fit = [
    ['F',0,'0.1600','1.000...','0.1000',1],
    ['kr',0,'30','1.000...','',0],
    ['R1f',1,'R1M...','0.0500','',0],
    ['R1r',1,'1','0.0500','',0],
    ['T2f',0,'0.0300','0.0030','0.1000',1],
    ['T2r',0,'1.300...','3.000...','5.000...',0]
  ];
  document.getElementById('fitRows').innerHTML = fit.map(r =>
    `<tr><td>${r[0]}</td><td class="mid"><span class="gbox">${r[1] ? tick : ''}</span></td><td${r[2] === 'R1M...' ? ' class="lft"' : ''}>${r[2]}</td><td>${r[3]}</td><td class="lft${r[5] ? ' ind' : ''}">${r[4]}</td></tr>`
  ).join('');
</script>

<script src="https://cdn.jsdelivr.net/npm/bootstrap@5.3.0/dist/js/bootstrap.bundle.min.js"></script>
</body>
</html>
